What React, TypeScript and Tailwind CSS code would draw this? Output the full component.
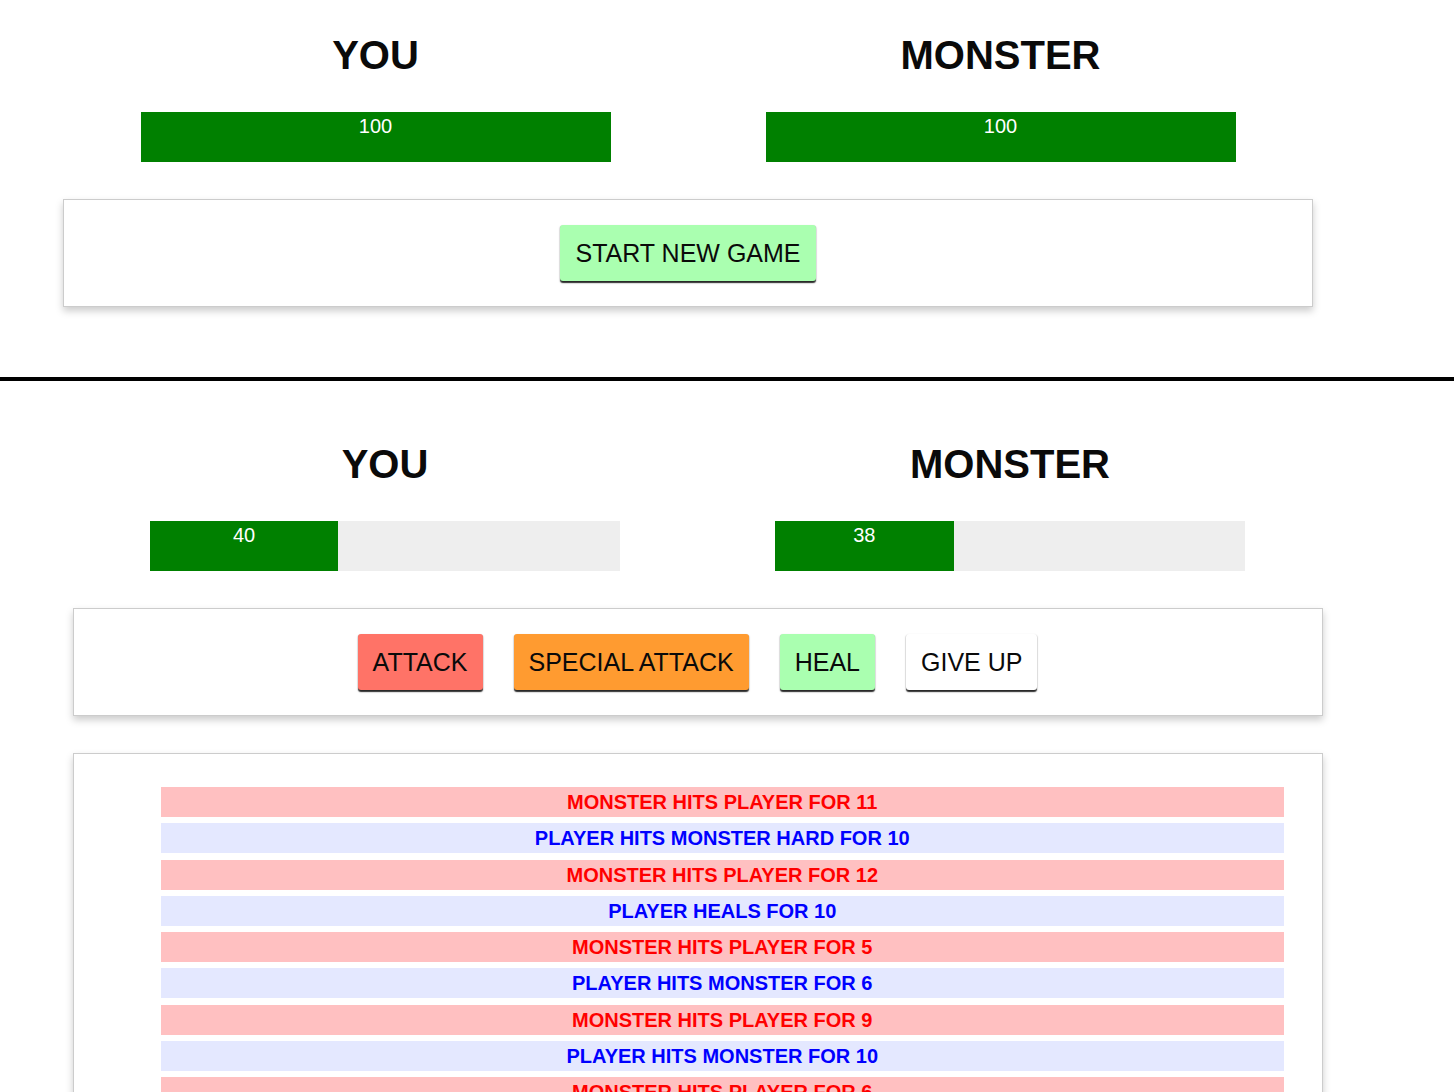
import React from "react";

type LogEntry = { who: "player" | "monster"; text: string };

const log: LogEntry[] = [
  { who: "monster", text: "Monster hits Player for 11" },
  { who: "player", text: "Player hits Monster hard for 10" },
  { who: "monster", text: "Monster hits Player for 12" },
  { who: "player", text: "Player heals for 10" },
  { who: "monster", text: "Monster hits Player for 5" },
  { who: "player", text: "Player hits Monster for 6" },
  { who: "monster", text: "Monster hits Player for 9" },
  { who: "player", text: "Player hits Monster for 10" },
  { who: "monster", text: "Monster hits Player for 6" },
  { who: "player", text: "Player hits Monster for 8" },
];

function HealthColumn({ title, value }: { title: string; value: number }) {
  return (
    <div className="w-[625px] px-[18.75px]">
      <h1 className="text-center text-[40px] leading-[48px] font-bold text-[#0a0a0a]">{title}</h1>
      <div className="mx-auto mt-[33px] h-[50px] w-[80%] bg-[#eeeeee]">
        <div
          className="h-full bg-[#008000] text-center text-[20px] leading-[28px] text-white"
          style={{ width: `${value}%` }}
        >
          {value}
        </div>
      </div>
    </div>
  );
}

function Btn({ label, color }: { label: string; color: string }) {
  return (
    <button
      className={`${color} rounded-[3px] px-[15px] py-[15px] text-[25px] leading-[26px] text-[#0a0a0a] shadow-[0_1.25px_1.25px_rgba(0,0,0,0.85)]`}
    >
      {label}
    </button>
  );
}

function Box({ children, className = "" }: { children: React.ReactNode; className?: string }) {
  return (
    <div className={`border border-[#cccccc] bg-white shadow-[0_4px_7.5px_#cccccc] ${className}`}>
      {children}
    </div>
  );
}

export default function App() {
  return (
    <div className="h-[1092px] w-full overflow-hidden bg-white font-['Liberation_Sans',Arial,sans-serif]">
      {/* Top screen */}
      <div className="h-[377px]">
        <div className="ml-[63px] w-[1250px] pt-[31px]">
          <div className="flex">
            <HealthColumn title="YOU" value={100} />
            <HealthColumn title="MONSTER" value={100} />
          </div>
          <Box className="mt-[37px] flex justify-center p-[25px]">
            <Btn label="START NEW GAME" color="bg-[#aaffb0]" />
          </Box>
        </div>
      </div>

      <div className="h-[4px] w-full bg-black" />

      {/* Bottom screen */}
      <div className="ml-[72.5px] w-[1250px] pt-[59px]">
        <div className="flex">
          <HealthColumn title="YOU" value={40} />
          <HealthColumn title="MONSTER" value={38} />
        </div>
        <Box className="mt-[37px] flex justify-center gap-[31px] p-[25px]">
          <Btn label="ATTACK" color="bg-[#ff7367]" />
          <Btn label="SPECIAL ATTACK" color="bg-[#ff9b30]" />
          <Btn label="HEAL" color="bg-[#aaffb0]" />
          <Btn label="GIVE UP" color="bg-[#ffffff]" />
        </Box>
        <Box className="mt-[37px] pb-[30px] pl-[87.5px] pr-[38px] pt-[33px]">
          <ul className="flex flex-col gap-[6.25px]">
            {log.map((e, i) => (
              <li
                key={i}
                className={`h-[30px] text-center text-[20px] font-bold uppercase leading-[30px] ${
                  e.who === "player" ? "bg-[#e4e8ff] text-[#0000ff]" : "bg-[#ffc0c1] text-[#ff0000]"
                }`}
              >
                {e.text}
              </li>
            ))}
          </ul>
        </Box>
      </div>
    </div>
  );
}
